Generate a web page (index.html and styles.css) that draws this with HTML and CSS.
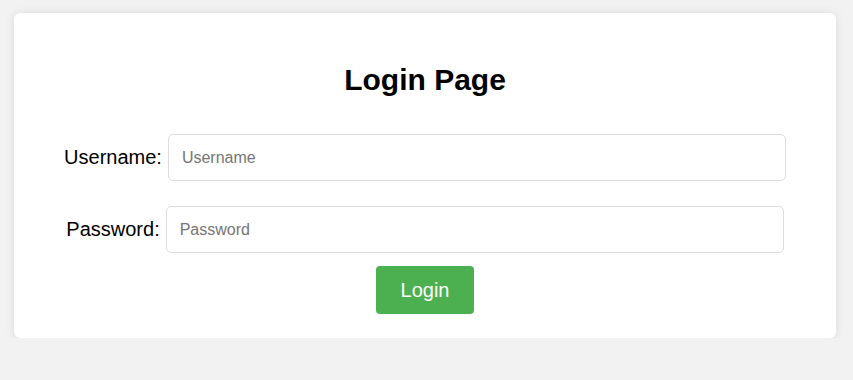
FILE: index.html
```html
<!DOCTYPE html>
<html lang="en">
<head>
<meta charset="utf-8">
<title>Login Page</title>
<link rel="stylesheet" href="styles.css">
</head>
<body>
  <div class="card">
    <h1 class="title">Login Page</h1>
    <form class="form">
      <div class="row">
        <label class="label" for="username">Username:</label>
        <input class="field" id="username" type="text" placeholder="Username">
      </div>
      <div class="row">
        <label class="label" for="password">Password:</label>
        <input class="field" id="password" type="password" placeholder="Password">
      </div>
      <button class="btn" type="button">Login</button>
    </form>
  </div>
</body>
</html>
```

FILE: styles.css
```css
html, body {
  margin: 0;
  padding: 0;
}
body {
  background: #f2f2f2;
  font-family: "Liberation Sans", Arial, sans-serif;
  padding: 13px 17px 0 14px;
}
.card {
  background: #fff;
  width: 822px;
  box-sizing: border-box;
  border-radius: 6px;
  box-shadow: 0 0 10px rgba(0, 0, 0, 0.1);
  padding: 48px 0 24px;
  display: flex;
  flex-direction: column;
  align-items: center;
}
.title {
  margin: 0;
  font-size: 30px;
  line-height: 38px;
  font-weight: bold;
  color: #000;
}
.form {
  margin-top: 35px;
  display: flex;
  flex-direction: column;
  align-items: center;
  width: 100%;
}
.row {
  display: flex;
  align-items: center;
  gap: 6px;
  margin-bottom: 25px;
}
.row:nth-child(2) {
  margin-bottom: 13px;
}
.label {
  font-size: 20px;
  color: #000;
}
.field {
  width: 618px;
  height: 47px;
  box-sizing: border-box;
  border: 1px solid #ddd;
  border-radius: 5px;
  padding: 0 13px;
  font-family: "Liberation Sans", Arial, sans-serif;
  font-size: 16px;
  color: #000;
  outline: none;
}
.field::placeholder {
  color: #757575;
}
.btn {
  width: 98px;
  height: 48px;
  border: none;
  border-radius: 4px;
  background: #4caf50;
  color: #fff;
  font-family: "Liberation Sans", Arial, sans-serif;
  font-size: 20px;
  cursor: pointer;
}
```
